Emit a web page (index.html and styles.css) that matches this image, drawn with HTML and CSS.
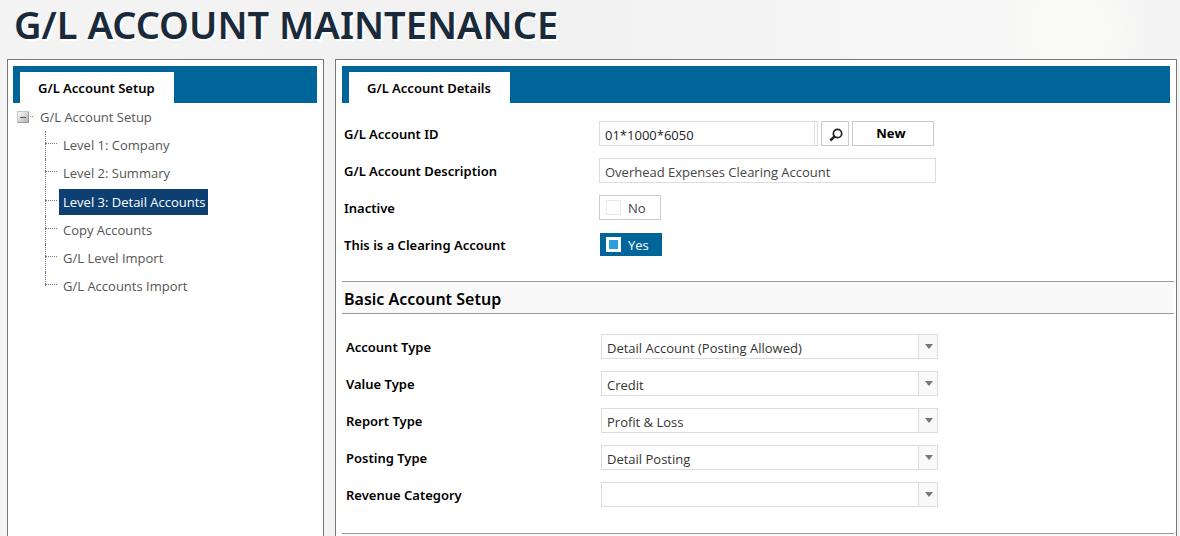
FILE: index.html
```html
<!DOCTYPE html>
<html lang="en">
<head>
<meta charset="utf-8">
<meta name="viewport" content="width=device-width, initial-scale=1">
<title>G/L Account Maintenance</title>
<link rel="stylesheet" href="styles.css">
</head>
<body>
<h1 class="page-title">G/L ACCOUNT MAINTENANCE</h1>
<main class="panels">
  <nav class="panel panel-nav" aria-label="G/L Account Setup">
    <div class="tab-bar"><button type="button" class="tab">G/L Account Setup</button></div>
    <div class="tree">
      <div class="tree-root">
        <button type="button" class="expander" aria-label="Collapse">
          <svg viewBox="0 0 16 13" width="16" height="13" aria-hidden="true">
            <defs><linearGradient id="box" x1="0" y1="0" x2="1" y2="1"><stop offset="0" stop-color="#fff"/><stop offset="1" stop-color="#b0b0b0"/></linearGradient></defs>
            <rect x=".5" y=".5" width="11" height="11" fill="url(#box)" stroke="#c4c4c4"/>
            <path d="M11.500 1v10.500H1" fill="none" stroke="#999"/>
            <path d="M3 6.500h6" stroke="#555"/>
            <path d="M13 5.500h1M15 5.500h1" stroke="#888"/>
          </svg>
        </button>
        <a class="tree-link" href="#setup">G/L Account Setup</a>
      </div>
      <ul class="tree-list">
        <li class="tree-item"><a class="tree-link" href="#company">Level 1: Company</a></li>
        <li class="tree-item"><a class="tree-link" href="#summary">Level 2: Summary</a></li>
        <li class="tree-item tree-item-selected"><a class="tree-link tree-link-selected" href="#detail" aria-current="page">Level 3: Detail Accounts</a></li>
        <li class="tree-item"><a class="tree-link" href="#copy">Copy Accounts</a></li>
        <li class="tree-item"><a class="tree-link" href="#level-import">G/L Level Import</a></li>
        <li class="tree-item"><a class="tree-link" href="#accounts-import">G/L Accounts Import</a></li>
      </ul>
    </div>
  </nav>
  <section class="panel panel-details">
    <div class="tab-bar"><button type="button" class="tab">G/L Account Details</button></div>
    <form class="form">
      <div class="fields">
        <div class="field">
          <label class="label" for="account-id">G/L Account ID</label>
          <div class="lookup">
            <span class="id-box"><input class="text-input id-input" id="account-id" type="text" value="01*1000*6050"></span>
            <button type="button" class="button button-search" aria-label="Search">
              <svg viewBox="0 0 14 14" width="14" height="14" fill="none" stroke="#222" aria-hidden="true"><circle cx="8.500" cy="5.500" r="4.200" stroke-width="1.700"/><path d="M5.300 8.700 1.300 12.500" stroke-width="2.500"/></svg>
            </button>
            <button type="button" class="button button-new">New</button>
          </div>
        </div>
        <div class="field">
          <label class="label" for="description">G/L Account Description</label>
          <input class="text-input description" id="description" type="text" value="Overhead Expenses Clearing Account">
        </div>
        <div class="field">
          <label class="label" for="inactive">Inactive</label>
          <label class="toggle"><input class="check" id="inactive" type="checkbox">No</label>
        </div>
        <div class="field">
          <label class="label" for="clearing">This is a Clearing Account</label>
          <label class="toggle toggle-on"><input class="check" id="clearing" type="checkbox" checked>Yes</label>
        </div>
      </div>
      <h2 class="section-title">Basic Account Setup</h2>
      <div class="fields fields-basic">
        <div class="field">
          <label class="label" for="account-type">Account Type</label>
          <span class="select-box"><select class="select" id="account-type"><option>Detail Account (Posting Allowed)</option></select></span>
        </div>
        <div class="field">
          <label class="label" for="value-type">Value Type</label>
          <span class="select-box"><select class="select" id="value-type"><option>Credit</option></select></span>
        </div>
        <div class="field">
          <label class="label" for="report-type">Report Type</label>
          <span class="select-box"><select class="select" id="report-type"><option>Profit &amp; Loss</option></select></span>
        </div>
        <div class="field">
          <label class="label" for="posting-type">Posting Type</label>
          <span class="select-box"><select class="select" id="posting-type"><option>Detail Posting</option></select></span>
        </div>
        <div class="field">
          <label class="label" for="revenue">Revenue Category</label>
          <span class="select-box"><select class="select" id="revenue"><option></option></select></span>
        </div>
      </div>
      <div class="section-end"></div>
    </form>
  </section>
</main>
</body>
</html>
```
FILE: styles.css
```css
* { box-sizing: border-box; }

body {
  margin: 0;
  min-height: 100vh;
  padding: 0 3px 0 7px;
  display: flex;
  flex-direction: column;
  background:
    radial-gradient(circle at 1070px 30px, #fafaf8 0, #fafaf8 35px, transparent 70px),
    linear-gradient(90deg, #f4f4f4, #f1f1f1 45%, #f7f7f7 80%, #f4f4f4);
  font-family: "Open Sans", "Noto Sans", sans-serif;
  font-size: 13px;
  color: #444;
}

button, input, select { font: inherit; color: inherit; }

.page-title {
  margin: 0;
  height: 59px;
  padding-left: 7px;
  font-family: "Noto Sans", sans-serif;
  font-size: 38px;
  line-height: 48px;
  font-weight: 600;
  color: #1a2a3a;
  text-shadow: 2px 2px 1px #fff;
  white-space: nowrap;
}

.panels {
  flex: 1;
  display: grid;
  grid-template-columns: 317px 1fr;
  gap: 11px;
}

.panel {
  border: 1px solid #777;
  border-bottom: 0;
  background: #fff;
  padding-top: 6px;
}
.panel-nav { padding-left: 5px; padding-right: 6px; }
.panel-details { padding-left: 6px; display: flex; flex-direction: column; }
.panel-details .tab-bar { margin-right: 6px; }

.tab-bar {
  display: flex;
  height: 37px;
  padding: 6px 7px 0;
  background: #006699;
}
.tab {
  border: 0;
  padding: 0 19px 0 18px;
  background: #fff;
  color: #000;
  font-family: "Noto Sans", sans-serif;
  font-weight: 600;
  white-space: nowrap;
}

.tree-root {
  display: flex;
  align-items: center;
  height: 28px;
  padding-left: 4px;
  gap: 3px;
}
.expander { display: flex; border: 0; padding: 0; background: none; }
.tree-list { list-style: none; margin: 0; padding: 0 0 0 32px; }
.tree-item {
  position: relative;
  display: flex;
  align-items: center;
  height: 28px;
  padding-left: 14px;
}
.tree-item-selected { height: 29px; }
.tree-item::before {
  content: "";
  position: absolute;
  left: 0;
  top: 0;
  bottom: 0;
  border-left: 1px dotted #777;
}
.tree-item:last-child::before { bottom: 50%; }
.tree-item::after {
  content: "";
  position: absolute;
  left: 0;
  top: calc(50% - 2px);
  width: 12px;
  border-top: 1px dotted #777;
}
.tree-link {
  padding: 0 4px;
  line-height: 26px;
  color: #555;
  text-decoration: none;
  white-space: nowrap;
}
.tree-link-selected { padding-right: 2px; background: #0d3f73; color: #fff; }

.form { flex: 1; display: flex; flex-direction: column; }
.fields {
  display: grid;
  gap: 12px;
  padding: 18px 2px 24px;
}
.fields-basic { padding: 20px 4px 26px; }
.field {
  display: grid;
  grid-template-columns: 255px 337px;
  align-items: center;
  height: 25px;
}
.label {
  color: #000;
  font-family: "Noto Sans", sans-serif;
  font-weight: 600;
  white-space: nowrap;
}

.text-input {
  width: 100%;
  height: 25px;
  border: 1px solid #ddd;
  padding: 2px 5px 0;
  background: #fff;
}
.lookup { display: flex; gap: 3px; }
.id-box { width: 219px; border: 1px solid #ddd; padding-right: 2px; height: 25px; }
.id-input { height: 23px; border-width: 0 1px 0 0; color: #222; }
.button {
  height: 25px;
  border: 1px solid #ccc;
  padding: 0;
  background: #fff;
  color: #000;
  font-weight: 700;
}
.button-search { width: 28px; display: grid; place-items: center; padding: 2px 0 0 2px; }
.button-new { width: 82px; padding: 0 4px 2px 0; }

.toggle {
  display: flex;
  align-items: center;
  justify-self: start;
  gap: 7px;
  width: 62px;
  height: 25px;
  border: 1px solid #ccc;
  padding-left: 6px;
  line-height: 16px;
}
.toggle-on {
  height: 23px;
  margin-left: 1px;
  padding-left: 5px;
  border-color: #006699;
  background: #006699;
  color: #fff;
}
.check {
  appearance: none;
  width: 15px;
  height: 15px;
  margin: 0;
  border: 1px solid #e8e8e8;
  background: #fff;
}
.check:checked { border: 3px solid #fff; background: #2a9fdc; }

.section-title {
  margin: 0;
  border: solid #999;
  border-width: 1px 0;
  margin-right: 2px;
  padding: 3px 0 0 2px;
  background: #f9f9f9;
  color: #000;
  font-family: "Noto Sans", sans-serif;
  font-size: 16px;
  line-height: 28px;
  font-weight: 600;
}
.section-end {
  flex: 1;
  min-height: 3px;
  margin-right: 2px;
  border-top: 1px solid #999;
  background: #f9f9f9;
}

.select-box { position: relative; display: block; }
.select {
  display: block;
  appearance: none;
  width: 100%;
  height: 25px;
  border: 1px solid #ddd;
  border-radius: 0;
  padding: 2px 24px 0 5px;
  background: linear-gradient(90deg, #ddd 1px, #f9f9f9 1px) right / 19px 100% no-repeat #fff;
  color: #333;
}
.select-box::after {
  content: "";
  position: absolute;
  right: 5px;
  top: 10px;
  border: solid transparent;
  border-width: 5px 4px 0;
  border-top-color: #777;
  pointer-events: none;
}
```
